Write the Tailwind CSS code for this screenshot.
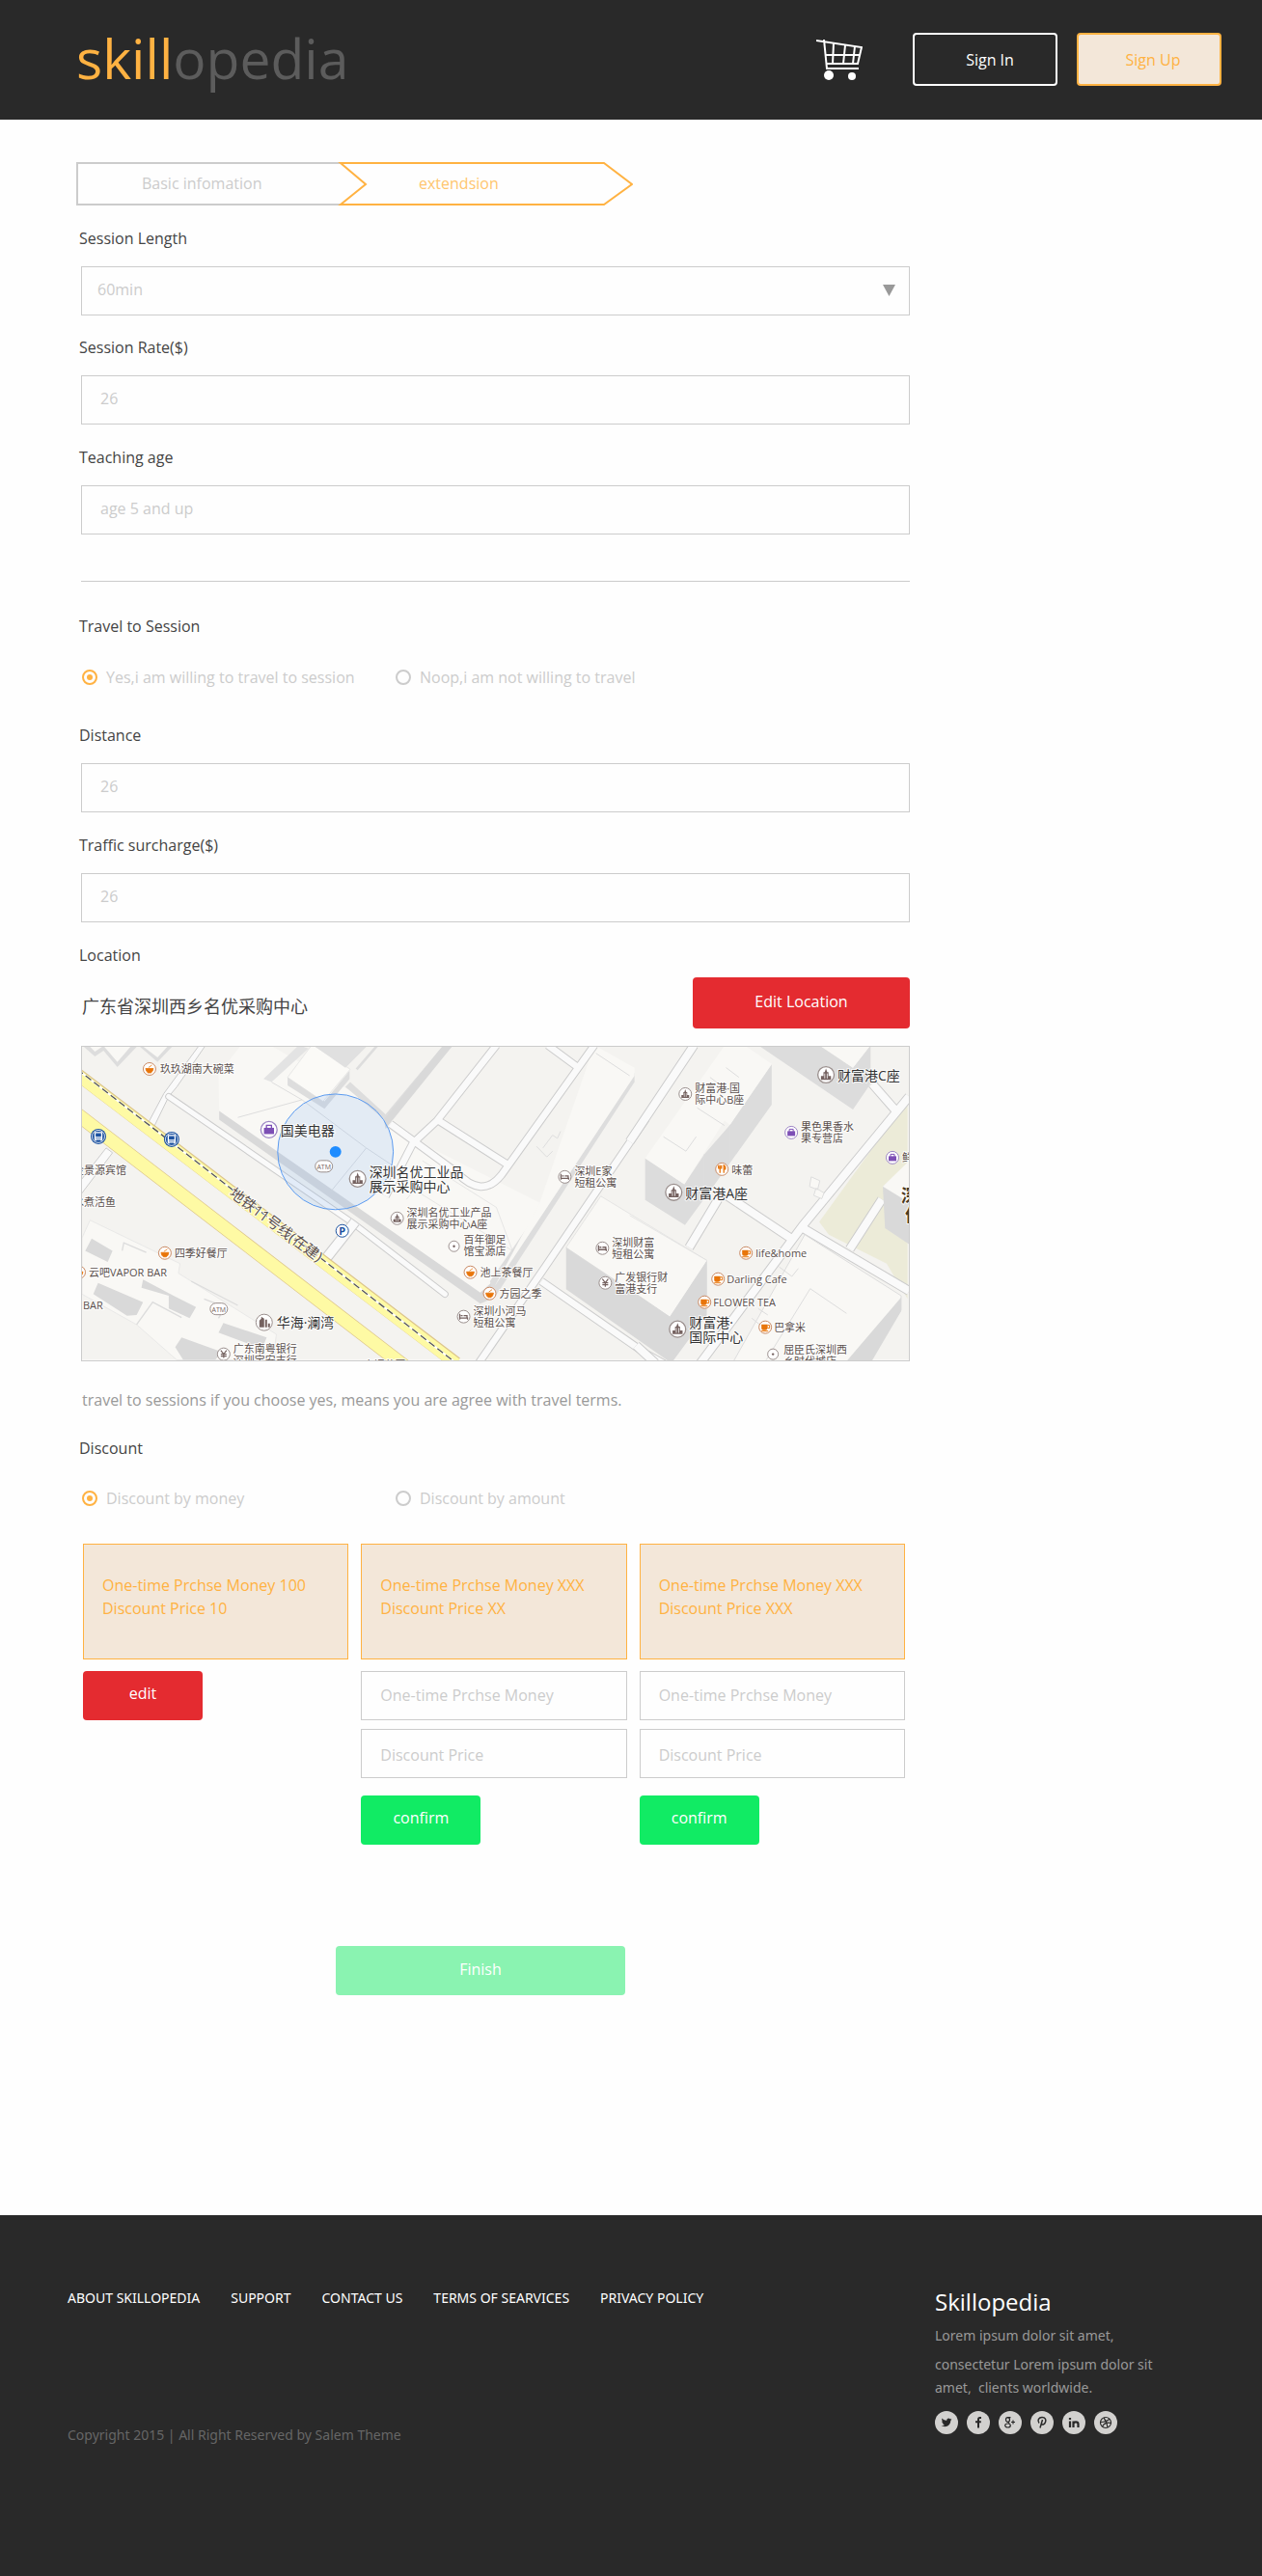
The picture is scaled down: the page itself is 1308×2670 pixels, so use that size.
<!DOCTYPE html>
<html lang="en">
<head>
<meta charset="utf-8">
<meta name="viewport" content="width=device-width, initial-scale=1">
<title>Skillopedia - Extension</title>
<script src="https://cdn.jsdelivr.net/npm/@tailwindcss/browser@4"></script>
</head>
<body class="bg-[#fefefe] font-['Open_Sans','Noto_Sans_CJK_SC',sans-serif] text-base leading-6 text-[#444]">
<div class="flex min-h-screen flex-col">

<header class="flex h-[124px] items-center justify-between bg-[#292929] pr-[42px] pl-[79px]">
  <a href="#" class="-mt-1 text-[57px] leading-none text-[#5c5c5c]"><span class="font-medium text-[#ffb242]">skill</span>opedia</a>
  <div class="-mt-px flex items-center gap-5">
    <a href="#" aria-label="Cart" class="mr-8">
      <svg class="h-[42px] w-12" viewBox="0 0 48 42" fill="none" stroke="#fff">
        <path d="M0 1 L47 8 L43 25 L11 25 M8 0 L11 30 H44" stroke-width="2"/>
        <path d="M18 3 L17 25 M30 6 L28 25 M40 7 L38 25 M9 16 H45" stroke-width="2"/>
        <circle cx="13" cy="37" r="5" fill="#fff" stroke="none"/><circle cx="37" cy="38" r="4" fill="#fff" stroke="none"/>
      </svg>
    </a>
    <button class="h-[55px] w-[150px] rounded border-2 border-white pl-2.5 text-white">Sign In</button>
    <button class="h-[55px] w-[150px] rounded border-2 border-[#ffb242] bg-[#f3e7d9] pl-2 text-[#ffb242]">Sign Up</button>
  </div>
</header>

<main class="flex-1 pt-11 pl-[79px]">
  <ol class="relative flex h-[45px] w-[577px] items-center pb-0.5 leading-6">
    <svg class="absolute inset-0 h-full w-full" viewBox="0 0 577 45" fill="none" aria-hidden="true">
      <path d="M274 1 H1 V44 H274" stroke="#ccc" stroke-width="2"/>
      <path d="M274 1 H547 L576 23 L547 44 H274 L300 23 Z" stroke="#ffb242" stroke-width="2"/>
    </svg>
    <li class="relative w-[275px] pl-[68px] text-[#ccc]">Basic infomation</li>
    <li class="relative pl-20 text-[#ffc670]" aria-current="step">extendsion</li>
  </ol>

  <form class="mt-[22px] ml-[5px] flex w-full max-w-[859px] flex-col">
    <label for="length" class="-ml-0.5">Session Length</label>
    <div class="relative mt-[17px]">
      <select id="length" class="h-[51px] w-full appearance-none border border-[#ccc] bg-transparent px-4 pb-1 text-[#ccc]"><option>60min</option></select>
      <svg class="pointer-events-none absolute top-[19px] right-[15px] h-3 w-[13px]" viewBox="0 0 13 12"><path d="M0 0H13L6.500 12Z" fill="#999"/></svg>
    </div>
    <label for="rate" class="mt-[21px] -ml-0.5">Session Rate($)</label>
    <input id="rate" placeholder="26" class="mt-[17px] h-[51px] border border-[#ccc] px-[19px] pb-1 placeholder:text-[#ccc]">
    <label for="age" class="mt-[22px] -ml-0.5">Teaching age</label>
    <input id="age" placeholder="age 5 and up" class="mt-[17px] h-[51px] border border-[#ccc] px-[19px] pb-1 placeholder:text-[#ccc]">
    <hr class="mt-12 border-[#ccc]">

    <fieldset class="mt-[34px]">
      <legend class="-ml-0.5">Travel to Session</legend>
      <div class="mt-[29px] flex text-[#ccc]">
        <label class="flex w-[325px] items-center gap-[9px]"><input type="radio" name="travel" checked class="ml-px size-4 appearance-none rounded-full border-2 border-[#ccc] p-[3px] checked:border-[#ffb242] checked:bg-[#ffb242] checked:bg-clip-content">Yes,i am willing to travel to session</label>
        <label class="flex items-center gap-[9px]"><input type="radio" name="travel" class="ml-px size-4 appearance-none rounded-full border-2 border-[#ccc] p-[3px] checked:border-[#ffb242] checked:bg-[#ffb242] checked:bg-clip-content">Noop,i am not willing to travel</label>
      </div>
    </fieldset>

    <label for="distance" class="mt-9 -ml-0.5">Distance</label>
    <input id="distance" placeholder="26" class="mt-[17px] h-[51px] border border-[#ccc] px-[19px] pb-1 placeholder:text-[#ccc]">
    <label for="traffic" class="mt-[22px] -ml-0.5">Traffic surcharge($)</label>
    <input id="traffic" placeholder="26" class="mt-[17px] h-[51px] border border-[#ccc] px-[19px] pb-1 placeholder:text-[#ccc]">
    <h2 class="mt-[22px] -ml-0.5">Location</h2>
    <div class="mt-[11px] flex items-center justify-between">
      <p class="pt-1.5 pl-px text-lg leading-6">广东省深圳西乡名优采购中心</p>
      <button type="button" class="h-[53px] w-[225px] rounded bg-[#e42b30] pb-1 text-white">Edit Location</button>
    </div>

    <div class="mt-[18px] border border-[#ccc]">
    <svg class="block w-full" viewBox="0 0 858 325" role="img" aria-label="Map of the session location" font-size="11" fill="#5a4f4c">
      <defs>
        <g id="bowl"><circle r="6.500" fill="#fff" stroke="#c98a63"/><path d="M-4 -.5H4Q3.500 3 1.500 4H-1.500Q-3.500 3 -4 -.5ZM-1 -1.500 L2.500 -4" fill="#e8750a" stroke="#e8750a" stroke-width=".8"/></g>
        <g id="cup"><circle r="6.500" fill="#fff" stroke="#c98a63"/><path d="M-4 -3H2.500V1Q2 3 0 3H-2Q-4 3 -4 1Z" fill="#e8750a"/><path d="M2.500 -2H4.500V1H2.500M-4 4H3" fill="none" stroke="#e8750a"/></g>
        <g id="fork"><circle r="6.500" fill="#fff" stroke="#c98a63"/><path d="M-2 4V-4M-3.500 -4V-1H-.5V-4M2 4V-4Q4 -3 3.500 0H2" fill="none" stroke="#e8750a" stroke-width="1.300"/></g>
        <g id="bag"><circle r="6.500" fill="#fff" stroke="#9d86c4"/><path d="M-4 -1.500H4V3.500H-4Z" fill="#7d4fb5"/><path d="M-2 -1V-3.500H2V-1" fill="none" stroke="#7d4fb5"/></g>
        <g id="tower"><circle r="6.500" fill="#fff" stroke="#9a8f8d"/><path d="M-4 4V1H-2V-2H-1L0 -5L1 -2H2V1H4V4Z" fill="#756260"/><path d="M-1 -1V3M1 -1V3" stroke="#fff" stroke-width=".6"/></g>
        <g id="bed"><circle r="6.500" fill="#fff" stroke="#9a8f8d"/><path d="M-4 -3V3M-4 1.500H4V3M-3 -1H-1M0 -1H3.500V1" fill="none" stroke="#756260" stroke-width="1.300"/></g>
        <g id="yen"><circle r="6.500" fill="#fff" stroke="#9a8f8d"/><path d="M-3 -4L0 0L3 -4M0 0V4M-3 0H3M-3 2H3" fill="none" stroke="#756260" stroke-width="1.200"/></g>
        <g id="dot"><circle r="5.500" fill="#fff" stroke="#9a8f8d"/><circle r="1.200" fill="#756260"/></g>
        <g id="bus"><circle r="8" fill="#1c52a0"/><circle r="6.500" fill="none" stroke="#fff" stroke-width=".8"/><path d="M-3.500 -4H3.500V3H-3.500Z M-3 3V4.500M3 3V4.500M-3.500 1H3.500" fill="none" stroke="#fff" stroke-width="1.300"/></g>
        <g id="atm"><rect x="-9" y="-6" width="18" height="12" rx="6" fill="#fff" stroke="#9a8f8d"/><text y="3" text-anchor="middle" font-size="7" fill="#756260">ATM</text></g>
      </defs>
      <rect width="858" height="325" fill="#f4f3f0"/>

      <g transform="translate(-5 -5) scale(.3333)">
        <path d="M380 10L270 160L222 250L240 262L285 170L310 140L400 10Z" fill="#fafafa" stroke="#ccc" stroke-width="3"/>
        <path d="M0 445L90 330L110 345L0 490Z" fill="#fafafa" stroke="#ccc" stroke-width="3"/>
        <path d="M285 170L860 565L1145 785" fill="none" stroke="#ccc" stroke-width="22" stroke-linecap="round"/>
        <path d="M285 170L860 565L1145 785" fill="none" stroke="#fafafa" stroke-width="16" stroke-linecap="round"/>
        <path d="M865 560L770 680" stroke="#ccc" stroke-width="34"/><path d="M865 560L770 680" stroke="#fafafa" stroke-width="28"/>
        <!-- building blocks, west -->
        <path d="M15 10L55 45L82 27L125 78L190 10Z" fill="#ddd"/><path d="M35 10L55 30L82 12L125 62L170 10Z" fill="#f9f8f5"/>
        <path d="M190 10L250 62L300 10Z" fill="#ddd"/><path d="M200 10L250 48L285 10Z" fill="#f9f8f5"/>
        <path d="M442 215L1255 805L1315 765L1440 500L1100 330L900 180L600 10H510L440 100Z" fill="#f9f8f5"/>
        <path d="M442 215L1255 780L1300 740L1290 800L1255 815L442 242Z" fill="#d9d9d9"/>
        <path d="M1285 745L1735 95V125L1300 795Z" fill="#ddd"/>
        <path d="M1440 500L1610 10L1735 80L1735 105L1300 760Z" fill="#f9f8f5"/>
        <path d="M1615 35L1720 105M1430 325L1462 358L1480 340M1450 330L1480 290L1495 300L1505 278" fill="none" stroke="#ddd" stroke-width="3"/>
        <path d="M655 110L770 185V208L655 135Z M770 208L848 115V90L770 185Z" fill="#ddd"/>
        <path d="M730 10L655 110L765 185L850 85L735 10Z" fill="#fbfaf7" stroke="#e0e0e0" stroke-width="2"/>
        <path d="M605 125L720 20L690 10L580 115Z" fill="#e3e3e3"/>
        <path d="M835 140L960 245L1170 10H1140L960 225L850 125Z" fill="#ddd"/>
        <path d="M735 10L835 80L905 10Z" fill="#e0e0e0"/>
        <path d="M605 125L700 180L500 235M700 180L900 330L790 465M900 330L1020 410" fill="none" stroke="#ddd" stroke-width="3"/>
        <path d="M15 610L40 555L320 690L315 720L620 910L610 990H310L185 880L15 785Z" fill="#f9f8f5" stroke="#e2e2e2" stroke-width="2"/>
        <path d="M45 612L110 650L95 685L25 650Z M65 750L205 810L185 850L155 852L50 785Z M205 740L300 790L370 825L350 860L285 830V790L200 765Z M455 875L590 920L575 955L440 905Z M325 920L450 965L430 990H330L305 950Z" fill="#d9d9d9"/>
        <path d="M140 650L145 625L215 655M185 880L235 810L325 858M355 745L500 820M395 800L460 825L440 860" fill="none" stroke="#dcdcdc" stroke-width="4"/>
        <!-- highway pair -->
        <path d="M0 100L1180 1000" stroke="#dcc48a" stroke-width="40"/>
        <path d="M0 102L1180 1002" stroke="#fefaa4" stroke-width="36"/>
        <path d="M0 225L1020 1010" stroke="#dcc48a" stroke-width="44"/>
        <path d="M0 225L1020 1010" stroke="#fefaa4" stroke-width="40"/>
        <path d="M0 85L1180 1000" stroke="#fff" stroke-width="6"/>
        <path d="M0 85L1180 1000" stroke="#555" stroke-width="4" stroke-dasharray="22 11"/>
      </g>

      <g transform="translate(285 -5) scale(.3333)" fill="none" stroke-linejoin="round">
        <g stroke="#ccc" stroke-width="26">
          <path d="M435 10L250 245L175 315L90 480M105 255L310 405Q390 490 450 415L740 10M255 245L475 385M595 10L690 80M900 240L580 710L380 1000M575 745L900 970L990 1020"/>
        </g>
        <g stroke="#fafafa" stroke-width="20">
          <path d="M435 10L250 245L175 315L90 480M105 255L310 405Q390 490 450 415L740 10M255 245L475 385M595 10L690 80M900 240L580 710L380 1000M575 745L900 970L990 1020"/>
        </g>
        <path d="M0 85L65 10" stroke="#ddd" stroke-width="8"/>
        <path d="M205 370L435 515L485 650M155 490L180 460L485 650" stroke="#ddd" stroke-width="2"/>
        <path d="M90 270L300 10H270L85 240Z" fill="#d9d9d9"/>
        <path d="M652 640L760 480L1090 680L975 855Z" fill="#f9f8f5" stroke="#ddd" stroke-width="2"/>
        <path d="M652 640L975 855L1090 680V850L980 1000L652 770Z" fill="#d9d9d9"/>
      </g>

      <g transform="translate(575 -5) scale(.3333)" fill="none">
        <path d="M845 180L570 560L600 600L780 690L845 800Z" fill="#ecebd8"/>
        <g stroke="#ccc" stroke-width="30"><path d="M180 10L-20 310M255 490L165 640M285 480L480 610M850 170L520 570L200 1000M520 580L850 775M735 130L805 210M665 645L765 490M0 945L60 1000"/></g>
        <g stroke="#fafafa" stroke-width="24"><path d="M180 10L-20 310M255 490L165 640M285 480L480 610M850 170L520 570L200 1000M520 580L850 775M735 130L805 210M665 645L765 490M0 945L60 1000"/></g>
        <path d="M28 362L150 443L212 350L292 258L422 70V195L240 450L152 570L28 492Z" fill="#dcdcdc"/>
        <path d="M28 362L275 12H340L422 68L292 258L275 245L150 443Z" fill="#f9f8f5"/>
        <path d="M85 295L155 340L187 295M190 205L275 260M230 110L270 140M212 350V480M292 258V370M280 80L320 110" stroke="#ddd" stroke-width="3"/>
        <path d="M380 10L675 210L730 130V10L675 80L570 10Z" fill="#dcdcdc"/><path d="M570 10H730L675 80Z" fill="#f9f8f5"/>
        <path d="M-20 540L220 680L105 855L-20 770Z" fill="#f9f8f5"/>
        <path d="M-20 540L220 680" stroke="#ddd" stroke-width="2"/>
        <path d="M-20 770L105 855L220 682V800L105 990L-20 900Z" fill="#d9d9d9"/>
        <path d="M545 420L572 432L565 460L540 450ZM560 455L585 470L578 488L553 478Z" fill="#f9f8f5" stroke="#ddd" stroke-width="3"/>
        <path d="M525 600L825 790V835L720 1000H300Z" fill="#f9f8f5" stroke="#ddd" stroke-width="3"/>
        <path d="M825 795V838L730 1000H650Z" fill="#d9d9d9"/>
        <path d="M655 845L542 768L405 990M445 700L485 730L505 705M380 830L410 850M360 860L385 880" stroke="#ddd" stroke-width="3"/>
        <path d="M768 450L850 380V630L775 580Z" fill="#d9d9d9"/><path d="M768 450L850 370V500Z" fill="#f9f8f5"/>
      </g>

      <circle cx="263" cy="109" r="60" fill="#6fa5f2" fill-opacity=".16" stroke="#5b9bf0"/>
      <circle cx="263" cy="109" r="6" fill="#1e8cff"/>

      <use href="#bowl" x="70" y="23"/><use href="#bowl" x="86" y="214"/><use href="#bowl" x="-3" y="234"/><use href="#bowl" x="403" y="234"/><use href="#bowl" x="423" y="256"/>
      <use href="#bus" x="17" y="93"/><use href="#bus" x="93" y="96"/>
      <use href="#atm" x="251" y="124"/><use href="#atm" x="142" y="272"/>
      <g transform="translate(194 86) scale(1.300)"><use href="#bag"/></g>
      <g transform="translate(286 137) scale(1.300)"><use href="#tower"/></g>
      <g transform="translate(772 29) scale(1.300)"><use href="#tower"/></g>
      <g transform="translate(614 151) scale(1.300)"><use href="#tower"/></g>
      <g transform="translate(618 293) scale(1.300)"><use href="#tower"/></g>
      <circle cx="189" cy="286" r="8.500" fill="#fff" stroke="#9a8f8d"/><path d="M184 291V284L186 282V280L189 282V291ZM190 291V283H192V291ZM193 291V287H195V291Z" fill="#756260"/>
      <use href="#tower" x="327" y="178"/><use href="#tower" x="626" y="49"/>
      <use href="#yen" x="147" y="319"/><use href="#yen" x="543" y="245"/>
      <use href="#dot" x="386" y="207"/><use href="#dot" x="717" y="319"/>
      <use href="#bed" x="396" y="280"/><use href="#bed" x="501" y="135"/><use href="#bed" x="540" y="209"/>
      <use href="#bag" x="736" y="89"/><use href="#bag" x="841" y="115"/>
      <use href="#fork" x="664" y="127"/>
      <use href="#cup" x="689" y="214"/><use href="#cup" x="660" y="241"/><use href="#cup" x="646" y="265"/><use href="#cup" x="709" y="291"/>
      <circle cx="270" cy="191" r="6.500" fill="#fff" stroke="#1c52a0" /><text x="270" y="195" text-anchor="middle" font-weight="700" fill="#1c52a0">P</text>

      <g stroke="#fff" stroke-width="2" stroke-opacity=".8" paint-order="stroke">
        <text x="81" y="27">玖玖湖南大碗菜</text>
        <text x="-9" y="132">金景源宾馆</text>
        <text x="-9" y="165">水煮活鱼</text>
        <text x="96" y="218">四季好餐厅</text>
        <text x="7" y="238">云吧VAPOR BAR</text>
        <text x="1" y="272">BAR</text>
        <text x="157" y="317">广东南粤银行</text><text x="157" y="329">深圳宝安支行</text>
        <text x="292" y="334">大福花园</text>
        <text x="337" y="176">深圳名优工业产品</text><text x="337" y="188">展示采购中心A座</text>
        <text x="396" y="204">百年御足</text><text x="396" y="216">馆宝源店</text>
        <text x="413" y="238">池上茶餐厅</text>
        <text x="433" y="260">方园之季</text>
        <text x="406" y="278">深圳小河马</text><text x="406" y="290">短租公寓</text>
        <text x="511" y="133">深圳E家</text><text x="511" y="145">短租公寓</text>
        <text x="550" y="207">深圳财富</text><text x="550" y="219">短租公寓</text>
        <text x="553" y="243">广发银行财</text><text x="553" y="255">富港支行</text>
        <text x="636" y="47">财富港·国</text><text x="636" y="59">际中心B座</text>
        <text x="746" y="87">果色果香水</text><text x="746" y="99">果专营店</text>
        <text x="674" y="132">味蕾</text>
        <text x="851" y="119">鲜</text>
        <text x="699" y="218">life&amp;home</text>
        <text x="669" y="245">Darling Cafe</text>
        <text x="655" y="269">FLOWER TEA</text>
        <text x="718" y="295">巴拿米</text>
        <text x="728" y="318">屈臣氏深圳西</text><text x="728" y="330">乡时代城店</text>
        <g font-size="14" fill="#333">
          <text x="206" y="92">国美电器</text>
          <text x="202" y="291">华海·澜湾</text>
          <text x="298" y="135">深圳名优工业品</text><text x="298" y="150">展示采购中心</text>
          <text x="784" y="35">财富港C座</text>
          <text x="626" y="157">财富港A座</text>
          <text x="630" y="291">财富港·</text><text x="630" y="306">国际中心</text>
        </g>
        <g font-size="18" font-weight="700" fill="#4b3a22"><text x="850" y="161">深</text><text x="854" y="181">仙</text></g>
        <text transform="translate(152 154) rotate(37)" font-size="15">地铁11号线(在建)</text>
      </g>
    </svg>
    </div>

    <p class="mt-7 pl-px text-[#999]">travel to sessions if you choose yes, means you are agree with travel terms.</p>

    <fieldset class="mt-[26px]">
      <legend class="-ml-0.5">Discount</legend>
      <div class="mt-7 flex text-[#ccc]">
        <label class="flex w-[325px] items-center gap-[9px]"><input type="radio" name="discount" checked class="ml-px size-4 appearance-none rounded-full border-2 border-[#ccc] p-[3px] checked:border-[#ffb242] checked:bg-[#ffb242] checked:bg-clip-content">Discount by money</label>
        <label class="flex items-center gap-[9px]"><input type="radio" name="discount" class="ml-px size-4 appearance-none rounded-full border-2 border-[#ccc] p-[3px] checked:border-[#ffb242] checked:bg-[#ffb242] checked:bg-clip-content">Discount by amount</label>
      </div>
    </fieldset>

    <div class="mt-[35px] grid grid-cols-3 items-start gap-[13px] pr-[5px] pl-0.5">
      <section class="flex flex-col items-start">
        <p class="flex h-[120px] w-full flex-col justify-center border border-[#ffb242] bg-[#f3e7d9] px-[19px] pb-2.5 text-[#ffb242]"><span>One-time Prchse Money 100</span><span>Discount Price 10</span></p>
        <button type="button" class="mt-3 h-[51px] w-[124px] rounded bg-[#e42b30] pb-1 text-white">edit</button>
      </section>
      <section class="flex flex-col items-start">
        <p class="flex h-[120px] w-full flex-col justify-center border border-[#ffb242] bg-[#f3e7d9] px-[19px] pb-2.5 text-[#ffb242]"><span>One-time Prchse Money XXX</span><span>Discount Price XX</span></p>
        <input aria-label="One-time purchase money" placeholder="One-time Prchse Money" class="mt-3 h-[51px] w-full border border-[#ccc] px-[19px] placeholder:text-[#ccc]">
        <input aria-label="Discount price" placeholder="Discount Price" class="mt-[9px] h-[51px] w-full border border-[#ccc] px-[19px] pt-1 placeholder:text-[#ccc]">
        <button type="button" class="mt-[18px] h-[51px] w-[124px] rounded bg-[#11eb64] pb-1 text-white">confirm</button>
      </section>
      <section class="flex flex-col items-start">
        <p class="flex h-[120px] w-full flex-col justify-center border border-[#ffb242] bg-[#f3e7d9] px-[19px] pb-2.5 text-[#ffb242]"><span>One-time Prchse Money XXX</span><span>Discount Price XXX</span></p>
        <input aria-label="One-time purchase money" placeholder="One-time Prchse Money" class="mt-3 h-[51px] w-full border border-[#ccc] px-[19px] placeholder:text-[#ccc]">
        <input aria-label="Discount price" placeholder="Discount Price" class="mt-[9px] h-[51px] w-full border border-[#ccc] px-[19px] pt-1 placeholder:text-[#ccc]">
        <button type="button" class="mt-[18px] h-[51px] w-[124px] rounded bg-[#11eb64] pb-1 text-white">confirm</button>
      </section>
    </div>
    <button class="mt-[105px] ml-[264px] h-[51px] w-[300px] rounded bg-[#8af3b1] pb-0.5 text-white">Finish</button>
  </form>
</main>

<footer class="mt-[220px] flex h-[374px] justify-between bg-[#292929] pr-[84px] pl-[70px] font-['Noto_Sans',sans-serif]">
  <div class="pt-[74px]">
    <nav class="flex gap-8 text-sm leading-6 text-white">
      <a href="#">ABOUT SKILLOPEDIA</a><a href="#">SUPPORT</a><a href="#">CONTACT US</a><a href="#">TERMS OF SEARVICES</a><a href="#">PRIVACY POLICY</a>
    </nav>
    <p class="mt-[118px] text-sm leading-6 text-[#666]">Copyright 2015 | All Right Reserved by Salem Theme</p>
  </div>
  <div class="w-[255px] pt-[74px]">
    <h2 class="font-['Open_Sans',sans-serif] text-2xl leading-8 text-white">Skillopedia</h2>
    <p class="mt-[7px] text-sm leading-6 text-[#999]">Lorem ipsum dolor sit amet,</p>
    <p class="mt-1.5 text-sm leading-6 whitespace-pre text-[#999]">consectetur Lorem ipsum dolor sit
amet,  clients worldwide.</p>
    <div class="mt-3 flex gap-[9px]">
      <a href="#" aria-label="Twitter"><svg class="size-6" viewBox="0 0 24 24"><circle cx="12" cy="12" r="12" fill="#d2d1cf"/><path d="M17.500 8.500l-1.200.4.8-1.200-1.400.5c-1.400-1.400-3.800-.3-3.500 1.700-2 0-3.600-1-4.700-2.300-.7 1.300-.2 2.500.6 3.100l-1-.2c.1 1.200.8 1.900 1.800 2.200h-1c.4.900 1.100 1.400 2.100 1.500-1 .8-2.200 1-3.500.9 4.300 2.600 9.800.4 9.800-5z" fill="#292929"/></svg></a>
      <a href="#" aria-label="Facebook"><svg class="size-6" viewBox="0 0 24 24"><circle cx="12" cy="12" r="12" fill="#d2d1cf"/><path d="M15 7H13.500Q12 7 12 9V17.500M9 11.300H14.800" fill="none" stroke="#292929" stroke-width="2"/></svg></a>
      <a href="#" aria-label="Google Plus"><svg class="size-6" viewBox="0 0 24 24" fill="none" stroke="#292929" stroke-width="1.200"><circle cx="12" cy="12" r="12" fill="#d2d1cf" stroke="none"/><ellipse cx="9.500" cy="9" rx="2" ry="2.300"/><ellipse cx="9.500" cy="15" rx="2.800" ry="2"/><path d="M9 6.700H12.500M10 11.300L11 13M13 11.500H17M15 9.500V13.500"/></svg></a>
      <a href="#" aria-label="Pinterest"><svg class="size-6" viewBox="0 0 24 24" fill="none" stroke="#292929" stroke-width="1.500"><circle cx="12" cy="12" r="12" fill="#d2d1cf" stroke="none"/><path d="M9 12.500C6.500 9.500 9 6.500 12 6.500C15.500 6.500 16.500 9 15.500 11.500C14.500 14.500 12 14.500 11 13M12.500 9L10 17.500"/></svg></a>
      <a href="#" aria-label="LinkedIn"><svg class="size-6" viewBox="0 0 24 24" fill="none" stroke="#292929" stroke-width="2.200"><circle cx="12" cy="12" r="12" fill="#d2d1cf" stroke="none"/><path d="M8 10.500V17M8 7V9M11.500 17V10.500M11.500 13Q12 11.300 14 11.300Q16.500 11.300 16.500 13.500V17"/></svg></a>
      <a href="#" aria-label="Dribbble"><svg class="size-6" viewBox="0 0 24 24" fill="none" stroke="#292929" stroke-width="1.200"><circle cx="12" cy="12" r="12" fill="#d2d1cf" stroke="none"/><circle cx="12" cy="12" r="5.500"/><path d="M10 7C12.500 10 13.500 13 14 17M6.500 11.500C10 11.500 14 10.500 16 8.200M8.500 16.200C10 13 13.500 11.700 17.500 12.500"/></svg></a>
    </div>
  </div>
</footer>
</div>
</body>
</html>
